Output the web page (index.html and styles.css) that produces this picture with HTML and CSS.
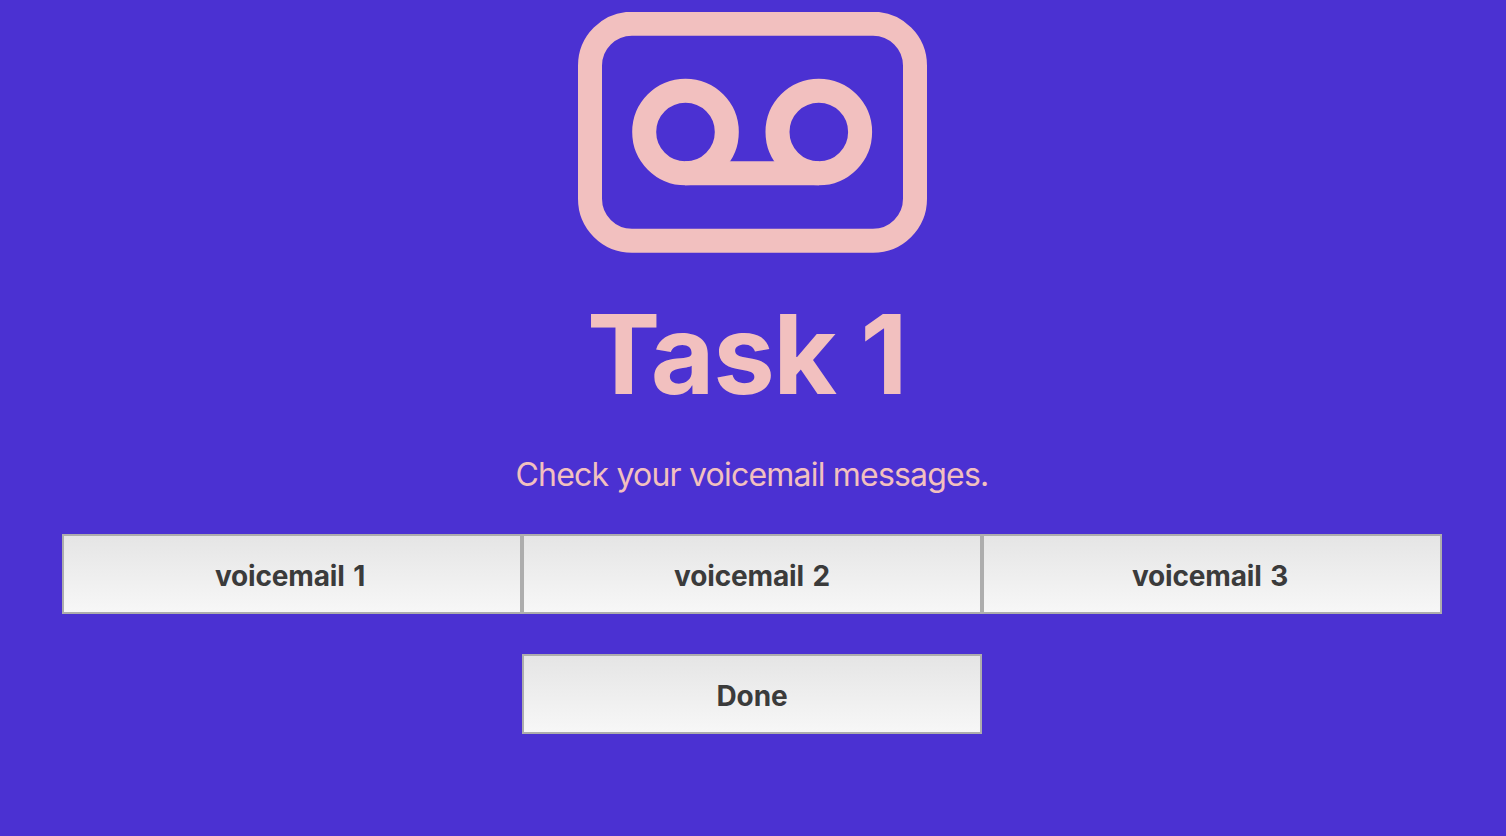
FILE: index.html
```html
<!DOCTYPE html>
<html lang="en">
<head>
<meta charset="utf-8">
<title>Task 1</title>
<link rel="stylesheet" href="styles.css">
</head>
<body>
<main class="page">
  <svg class="voicemail-icon" viewBox="0 0 350 242" aria-hidden="true">
    <rect x="12" y="11.700" width="325" height="217" rx="42"/>
    <circle cx="107.500" cy="120" r="41.300"/>
    <circle cx="240.800" cy="120" r="41.300"/>
    <path d="M107 161.300H241"/>
  </svg>
  <h1 class="title">Task 1</h1>
  <p class="lead">Check your voicemail messages.</p>
  <div class="messages">
    <button class="button side">voicemail 1</button>
    <button class="button">voicemail 2</button>
    <button class="button side">voicemail 3</button>
  </div>
  <button class="button done">Done</button>
</main>
</body>
</html>
```

FILE: styles.css
```css
body {
  margin: 0;
  background: #4b31d2;
  color: #f2c0bf;
  font-family: Inter, sans-serif;
}

.page {
  box-sizing: border-box;
  height: 836px;
  padding: 12px 64px 0 62px;
  display: flex;
  flex-direction: column;
  align-items: center;
}

.voicemail-icon {
  width: 350px;
  height: 242px;
  flex: none;
  margin-left: 2px;
  fill: none;
  stroke: #f2c0bf;
  stroke-width: 24px;
}

.title {
  margin: 33px 0 0;
  padding-right: 11px;
  font-size: 110px;
  line-height: 134px;
  font-weight: 700;
  letter-spacing: -1.5px;
  white-space: nowrap;
}

.lead {
  margin: 34px 0 0;
  font-size: 32px;
  line-height: 40px;
  letter-spacing: -0.8px;
}

.messages {
  align-self: stretch;
  display: flex;
  margin-top: 39px;
}

.button {
  box-sizing: border-box;
  width: 460px;
  height: 80px;
  padding: 4px 0 0;
  border: 2px solid #adadad;
  background: linear-gradient(#e5e5e5, #f7f7f7);
  color: #3b3b3b;
  font: 700 28px/34px Inter, sans-serif;
  letter-spacing: -0.15px;
  word-spacing: 2px;
}

.side {
  padding-right: 4px;
}

.done {
  margin-top: 40px;
}
```
